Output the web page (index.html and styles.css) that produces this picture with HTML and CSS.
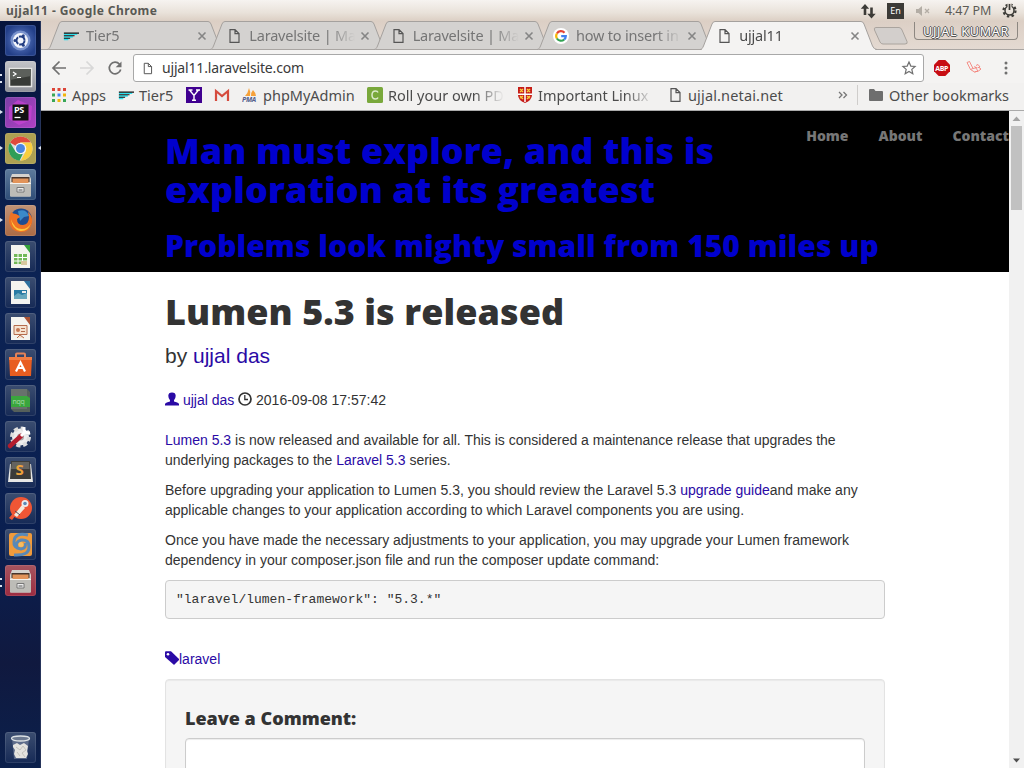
FILE: index.html
```html
<!DOCTYPE html>
<html lang="en">
<head>
<meta charset="utf-8">
<title>ujjal11</title>
<link rel="stylesheet" href="styles.css">
</head>
<body>
<svg class="defs" width="0" height="0">
  <defs>
    <symbol id="doc" viewBox="0 0 16 16"><path d="M4 1.600h5l4 4v8.800H4z M9 1.600v4h4" fill="none" stroke="#555" stroke-width="1.200"/></symbol>
    <symbol id="close" viewBox="0 0 10 10"><path d="M1.500 1.500l7 7M8.500 1.500l-7 7" stroke="#858585" stroke-width="1.600"/></symbol>
    <symbol id="tier" viewBox="0 0 18 16"><path d="M1 6h15M1 9h10M1 11.800h5" stroke="#2fe0ee" stroke-width="1.800"/><path d="M1 4.800h17M1 7.700h12M1 10.600h7" stroke="#111" stroke-width="1.200"/></symbol>
    <symbol id="tab" viewBox="0 0 177 29"><path d="M0 28.500C2 28.500 2.500 27 3.500 25L12 3Q13 .5 15 .5H161Q163 .5 164 3L172.500 25Q174 28.500 177 28.500"/></symbol>
    <symbol id="cabinet" viewBox="0 0 31 31"><path d="M7 5h17l2 5v16q0 1.500-1 1.500H6q-1 0-1-1.500V10z" fill="#d5d3ce"/><path d="M6.500 8h18v5h-18z" fill="#47362d"/><path d="M7.500 9.500h16V14h-16z" fill="#e2945a"/><path d="M5 14h21v12q0 1.500-1 1.500H6q-1 0-1-1.500z" fill="#bdbcb7"/><path d="M5 14.500h21" stroke="#f4f2ee"/><path d="M12 18.500h7v4.500h-7z" fill="#eee" stroke="#777"/><path d="M13.500 21h4" stroke="#555"/></symbol>
    <symbol id="page" viewBox="0 0 31 31"><path d="M6 4h14l5 6v17H6z" fill="#f4f4ef"/></symbol>
  </defs>
</svg>

<header class="panel">
  <div class="panel-title">ujjal11 - Google Chrome</div>
  <div class="tray">
    <svg width="16" height="16" viewBox="0 0 16 16"><path d="M5 1L.8 5.800H3.700V12h2.600V5.800H9.200zM11.500 15.500L7.300 10.700H10.200V4.500h2.600v6.200h2.900z" fill="#3c3b37"/></svg>
    <span class="lang">En</span>
    <svg class="speaker" width="16" height="14" viewBox="0 0 16 14"><path d="M1 5h2.500L7 2v10L3.500 9H1z" fill="#b3ada5"/><path d="M10 5l4 4M14 5l-4 4" stroke="#b3ada5" stroke-width="1.300"/></svg>
    <span class="clock">4:47 PM</span>
    <svg width="15" height="15" viewBox="0 0 15 15"><circle cx="7.500" cy="7.500" r="6" fill="none" stroke="#3c3b37" stroke-width="2.200" stroke-dasharray="2.400 2.312"/><circle cx="7.500" cy="7.500" r="4.500" fill="none" stroke="#3c3b37" stroke-width="1.500"/><path d="M7.500 0v7" stroke="#e9e2db" stroke-width="4"/><path d="M7.500 1v6" stroke="#3c3b37" stroke-width="1.700"/></svg>
  </div>
</header>

<div class="desktop">
  <aside class="launcher">
    <div class="tile t-ubuntu"><svg viewBox="0 0 31 31"><circle cx="15.500" cy="15.500" r="10" fill="#9fb4e4" opacity=".6"/><circle cx="15.500" cy="15.500" r="7.500" fill="#f4f6fc"/><circle cx="15.500" cy="15.500" r="4" fill="none" stroke="#233e83" stroke-width="2" stroke-dasharray="7.400 1"/><circle cx="10" cy="15.500" r="1.500" fill="#233e83"/><circle cx="18.300" cy="10.700" r="1.500" fill="#233e83"/><circle cx="18.300" cy="20.300" r="1.500" fill="#233e83"/></svg></div>
    <div class="tile t-grey run2"><svg viewBox="0 0 31 31"><rect x="4.500" y="7.500" width="22" height="18" fill="#383b37" stroke="#e6e6e4" stroke-width="1.500"/><path d="M5 8h21v7L5 19z" fill="#5c605b"/><path d="M8 11l3 2-3 2M12 16.500h4" fill="none" stroke="#fff" stroke-width="1.200"/></svg></div>
    <div class="tile t-ps run"><svg viewBox="0 0 31 31"><path d="M4 10L13 3l14 6-1 14-12 5-10-6z" fill="#d244d9" opacity=".6"/><rect x="7.500" y="7.500" width="16" height="16" fill="#111"/><text x="9" y="16" font-size="9" class="glyph">PS</text><path d="M9.500 20.500h6" stroke="#fff" stroke-width="1.300"/></svg></div>
    <div class="tile t-chrome run active"><svg viewBox="0 0 31 31"><circle cx="15.500" cy="15.500" r="12" fill="#ddd"/><path d="M15.500 15.500L5 9.500A12.200 12.200 0 0 1 26 9.500H15.500z" fill="#df4a3c"/><path d="M15.500 9.500H26A12.200 12.200 0 0 1 15.500 27.700L20.700 18.500z" fill="#f9ce3e"/><path d="M5 9.500L10.500 18.500L15.500 21L18 20.500L14.500 27.700A12.200 12.200 0 0 1 5 9.500z" fill="#2f9e57"/><circle cx="15.500" cy="15.500" r="5.800" fill="#f5f5f5"/><circle cx="15.500" cy="15.500" r="4.500" fill="#4a86e0"/></svg></div>
    <div class="tile t-slate"><svg viewBox="0 0 31 31"><use href="#cabinet"/></svg></div>
    <div class="tile t-firefox run"><svg viewBox="0 0 31 31"><circle cx="16" cy="14.500" r="11" fill="#1f4d91"/><path d="M13 6q8-3 11 5l-5 1-4 4z" fill="#3a8ac9"/><path d="M6 7Q8 9 11 9Q14 10 15 12L12 14Q12 20 18 20Q24 19 24 12L23 7Q28 11 27 18Q24 28 15 27Q5 26 4 16Q4 11 6 7z" fill="#ef7224"/><path d="M6 14Q9 24 17 24Q23 24 26 18Q23 27 15 26Q7 24 6 14z" fill="#ffc63c"/></svg></div>
    <div class="tile"><svg viewBox="0 0 31 31"><use href="#page"/><path d="M19 4h6v8z" fill="#35a23c"/><path d="M9 13h13v10H9z" fill="#72b958"/><path d="M9 16.500h13M9 20h13M13 13v10M17.500 13v10" stroke="#fff"/><path d="M16 20h6v4h-6z" fill="#d7c8a0"/></svg></div>
    <div class="tile"><svg viewBox="0 0 31 31"><use href="#page"/><path d="M19 4h6v8z" fill="#2d719f"/><path d="M9 13h13v9H9z" fill="#287ba4"/><path d="M9 19l4-3 4 2 5-2v6H9z" fill="#68a8bd"/><path d="M17 14h4v2h-4z" fill="#eee"/></svg></div>
    <div class="tile"><svg viewBox="0 0 31 31"><use href="#page"/><path d="M19 4h6v8z" fill="#a85235"/><path d="M9 12.500h13v9H9zM12 25l3-3 4 3" fill="#f5e2cf" stroke="#b56c4c"/><circle cx="13" cy="17" r="2" fill="#c57853"/><path d="M16 15.500h4M16 18.500h4" stroke="#b56c4c"/></svg></div>
    <div class="tile"><svg viewBox="0 0 31 31"><path d="M11 8V5.500q0-1 1-1h7q1 0 1 1V8" fill="none" stroke="#e48258" stroke-width="2"/><path d="M4 8h23l-1 19H5z" fill="#e85d20"/><path d="M4 8h23v3H4z" fill="#f17c43"/><path d="M11 22.500l4.500-9L20 22.500M12.500 19h6" fill="none" stroke="#fff" stroke-width="2.200"/></svg></div>
    <div class="tile"><svg viewBox="0 0 31 31"><path d="M6 4h16l3 3v20H9l-3-3z" fill="#55605b"/><path d="M6 4h16v20H6z" fill="#68716c"/><path d="M6 11h16l3 2v9H6z" fill="#3aa63d"/><text x="7.500" y="19" font-size="7" class="glyph soft">nqq</text></svg></div>
    <div class="tile"><svg viewBox="0 0 31 31"><circle cx="15.500" cy="16" r="8.500" fill="#eee" stroke="#ddd" stroke-width="4" stroke-dasharray="4 2.670"/><circle cx="15.500" cy="16" r="3.500" fill="#aaa"/><path d="M5 25l11-10" stroke="#b41d2e" stroke-width="4.500" stroke-linecap="round"/><path d="M16 15l5-5M19 6q-1 6 6 6" fill="none" stroke="#fff" stroke-width="3"/></svg></div>
    <div class="tile"><svg viewBox="0 0 31 31"><path d="M5 7h21l2 18H3z" fill="#e7e7e5"/><path d="M6 4h19l1 18H5z" fill="#3b3b39"/><path d="M7 5h17l.5 7H6z" fill="#64635f"/><text x="10.500" y="18" font-size="15" class="glyph sublime">S</text></svg></div>
    <div class="tile"><svg viewBox="0 0 31 31"><circle cx="16" cy="15" r="11" fill="#ef5635"/><path d="M4 25l5-6 2 3-4 5z" fill="#ef5635"/><path d="M9 22l8-10 3 3-8 9z" fill="#f4e9dc"/><circle cx="20" cy="10.500" r="3.500" fill="#eee"/><circle cx="20" cy="10.500" r="1.800" fill="#5c89b5"/><path d="M10 18l5 4" stroke="#4b4b58"/></svg></div>
    <div class="tile"><svg viewBox="0 0 31 31"><rect x="4" y="4" width="23" height="23" rx="2" fill="#f09b3c"/><path d="M23 6Q10 3 9 12Q8 19 16 20Q22 19 20 14M9 26Q24 27 24 18Q24 10 16 11Q10 13 12 18" fill="none" stroke="#5a89b8" stroke-width="3"/><circle cx="16" cy="15.500" r="2.500" fill="#f7bd60"/></svg></div>
    <div class="tile t-red run2"><svg viewBox="0 0 31 31"><use href="#cabinet"/></svg></div>
    <div class="tile trash"><svg viewBox="0 0 31 31"><path d="M7 6h17l-2 21H9z" fill="#7e8ba3" opacity=".6"/><path d="M8 13l4-2 3 2 4-2 4 3-1 5 1 3-2 4H11l-2-4 1-4-2-3z" fill="#e4e3df"/><path d="M11 15l4 3 3-4 3 4-4 3 3 4M12 20l3 4" fill="none" stroke="#c3c2bd"/><ellipse cx="15.500" cy="6.500" rx="9" ry="2.500" fill="#6c7990" stroke="#dce1e4" stroke-width="1.300"/></svg></div>
  </aside>

  <main class="browser">
    <div class="tabstrip">
      <div class="tab"><svg class="shape"><use href="#tab"/></svg><svg class="fav"><use href="#tier"/></svg><span class="label">Tier5</span><svg class="x"><use href="#close"/></svg></div>
      <div class="tab"><svg class="shape"><use href="#tab"/></svg><svg class="fav"><use href="#doc"/></svg><span class="label">Laravelsite | Ma</span><svg class="x"><use href="#close"/></svg></div>
      <div class="tab"><svg class="shape"><use href="#tab"/></svg><svg class="fav"><use href="#doc"/></svg><span class="label">Laravelsite | Ma</span><svg class="x"><use href="#close"/></svg></div>
      <div class="tab"><svg class="shape"><use href="#tab"/></svg><svg class="fav" viewBox="0 0 16 16"><circle cx="8" cy="8" r="8" fill="#fff"/><g fill="none" stroke-width="2.200"><path d="M11.500 4.700A4.800 4.800 0 0 0 3.900 5.500" stroke="#e54335"/><path d="M3.900 5.500A4.800 4.800 0 0 0 3.900 10.500" stroke="#f6b704"/><path d="M3.900 10.500A4.800 4.800 0 0 0 11.200 11.500" stroke="#34a353"/><path d="M11.200 11.500A4.800 4.800 0 0 0 12.800 8.100H8.200" stroke="#4280ef"/></g></svg><span class="label">how to insert in</span><svg class="x"><use href="#close"/></svg></div>
      <div class="tab current"><svg class="shape"><use href="#tab"/></svg><svg class="fav"><use href="#doc"/></svg><span class="label">ujjal11</span><svg class="x"><use href="#close"/></svg></div>
      <svg class="newtab" viewBox="0 0 36 18"><path d="M3 .5H26Q28 .5 29 3L34 14.500Q35 17 32 17H10Q8 17 7 15L1.500 3Q.5 .5 3 .5z" fill="#d3cfcc" stroke="#aaa49e"/></svg>
      <div class="profile">UJJAL KUMAR</div>
    </div>

    <div class="toolbar">
      <svg class="nav" viewBox="0 0 16 16"><path d="M15 8H2.500M8.500 1.500L2 8l6.500 6.500" fill="none" stroke="#707070" stroke-width="1.700"/></svg>
      <svg class="nav" viewBox="0 0 16 16"><path d="M1 8h12.500M7.500 1.500L14 8l-6.500 6.500" fill="none" stroke="#d8d8d8" stroke-width="1.700"/></svg>
      <svg class="nav" viewBox="0 0 16 16"><path d="M12.500 4.200A5.800 5.800 0 1 0 13.700 9.500" fill="none" stroke="#707070" stroke-width="1.700"/><path d="M14.500 1.500v5.800H8.700z" fill="#707070"/></svg>
      <div class="omnibox">
        <svg class="omni-doc" viewBox="0 0 16 16"><use href="#doc"/></svg>
        <span class="url">ujjal11.laravelsite.com</span>
        <svg class="star" viewBox="0 0 16 16"><path d="M8 2l1.800 4.100 4.300.4-3.300 2.900 1 4.300L8 11.400l-3.800 2.300 1-4.300-3.300-2.900 4.300-.4z" fill="none" stroke="#707070" stroke-width="1.200"/></svg>
      </div>
      <svg class="abp" viewBox="0 0 16 16"><path d="M4.700 0h6.600L16 4.700v6.600L11.300 16H4.700L0 11.300V4.700z" fill="#c70d13"/><text x="1.200" y="10.600" font-size="7" class="glyph">ABP</text></svg>
      <svg class="lara" viewBox="0 0 16 16"><path d="M1 2.500L3.500 1.500 7 8.500 4.500 9.500zM4.500 9.500l4 2.500 3.500-1L8.500 6M10 5.500l2-1 2 2.500-2.500.8M7 8.500l4-1M8.500 12l4-1 2.500-2-2-1.500" fill="none" stroke="#f4827b" stroke-width=".9"/></svg>
      <svg class="dots" viewBox="0 0 4 14"><g fill="#707070"><circle cx="2" cy="2" r="1.500"/><circle cx="2" cy="7" r="1.500"/><circle cx="2" cy="12" r="1.500"/></g></svg>
    </div>

    <div class="bookmarks">
      <div class="bm b-apps"><svg viewBox="0 0 16 16"><path d="M1 1h3v3H1zM6.500 1h3v3h-3zM12 1h3v3h-3z" fill="#dc4437"/><path d="M1 6.500h3v3H1zM12 12h3v3h-3z" fill="#3aa757"/><path d="M6.500 6.500h3v3h-3z" fill="#4285f4"/><path d="M12 6.500h3v3h-3zM6.500 12h3v3h-3z" fill="#f2b50b"/><path d="M1 12h3v3H1z" fill="#3aa757"/></svg><span>Apps</span></div>
      <div class="bm b-tier"><svg><use href="#tier"/></svg><span>Tier5</span></div>
      <div class="bm b-y"><svg viewBox="0 0 16 16"><path d="M0 0h16v16H0z" fill="#400090"/><path d="M3.500 3L8 8.500 12.500 3M8 8v5M2.500 3h4M10 3h4M6 13.200h4" stroke="#fff" stroke-width="1.400" fill="none"/></svg></div>
      <div class="bm b-gmail"><svg viewBox="0 0 16 16"><path d="M1 3h14v11H1z" fill="#eee"/><path d="M2 14V4l6 5 6-5v10" fill="none" stroke="#d54b3d" stroke-width="2.200"/></svg></div>
      <div class="bm b-pma"><svg viewBox="0 0 16 16"><path d="M3 9q3-3 4-8 2 4 1 8zM9 9q0-4 2-6 3 3 3 6z" fill="#f6a13a"/><text x="0" y="15" font-size="7" class="glyph pma">PMA</text></svg><span>phpMyAdmin</span></div>
      <div class="bm b-roll"><svg viewBox="0 0 16 16"><rect width="16" height="16" rx="1.500" fill="#79a83b"/><path d="M11 5.500Q10.500 4 8.500 4Q5 4 5 8t3.500 4Q10.500 12 11 10.500" fill="none" stroke="#dceacb" stroke-width="1.500"/></svg><span class="fade">Roll your own PD</span></div>
      <div class="bm b-linux"><svg viewBox="0 0 16 16"><path d="M1 0h14v8q0 5-7 8-7-3-7-8z" fill="#c61c18"/><path d="M3 2l3 3M6 2L3 5M10 2l3 3M13 2l-3 3M3 9l3 3M6 9l-3 2M10 9l3 2M13 9l-3 3" stroke="#f8cd3c" stroke-width="1.400"/><path d="M8 0v15M1 7.200h14" stroke="#fff" stroke-width="1.500"/></svg><span class="fade">Important Linux</span></div>
      <div class="bm b-netai"><svg><use href="#doc"/></svg><span>ujjal.netai.net</span></div>
      <svg class="more" viewBox="0 0 10 8"><path d="M1 1l3 3-3 3M5.500 1l3 3-3 3" fill="none" stroke="#777" stroke-width="1.300"/></svg>
      <div class="bm b-other"><svg viewBox="0 0 16 16"><path d="M1 3q0-1 1-1h4l1.500 2H14q1 0 1 1v8q0 1-1 1H2q-1 0-1-1z" fill="#6e6e6e"/></svg><span>Other bookmarks</span></div>
    </div>

    <div class="viewport">
      <div class="page">
        <header class="hero">
          <div class="hero-text">
            <h1>Man must explore, and this is exploration at its greatest</h1>
            <h2>Problems look mighty small from 150 miles up</h2>
          </div>
          <nav class="site-nav"><a>Home</a><a>About</a><a>Contact</a></nav>
        </header>
        <article class="post">
          <h1>Lumen 5.3 is released</h1>
          <p class="lead">by <a>ujjal das</a></p>
          <p class="meta"><a><svg class="gi" viewBox="0 0 14 14"><path d="M0 13.500v-1.800Q1 10.500 5 9.500V8.300Q3.300 6.500 3.300 3.800 3.300.4 7 .4t3.700 3.400Q10.700 6.500 9 8.300v1.200q4 1 5 2.200v1.800z" fill="#2a0aa5"/></svg> ujjal das</a> <svg class="gi" viewBox="0 0 14 14"><circle cx="7" cy="7" r="6" fill="none" stroke="#333" stroke-width="1.700"/><path d="M6.800 3v4.500H10" fill="none" stroke="#333" stroke-width="1.300"/></svg> 2016-09-08 17:57:42</p>
          <p><a>Lumen 5.3</a> is now released and available for all. This is considered a maintenance release that upgrades the underlying packages to the <a>Laravel 5.3</a> series.</p>
          <p>Before upgrading your application to Lumen 5.3, you should review the Laravel 5.3 <a>upgrade guide</a>and make any applicable changes to your application according to which Laravel components you are using.</p>
          <p>Once you have made the necessary adjustments to your application, you may upgrade your Lumen framework dependency in your composer.json file and run the composer update command:</p>
          <pre>"laravel/lumen-framework": "5.3.*"</pre>
          <p class="tags"><a><svg class="gi" viewBox="0 0 14 14"><path d="M0 1.200Q0 .2 1 .2h5L14 8q.4.500 0 1L9.500 13.600q-.5.400-1 0L0 6z" fill="#2a0aa5"/><circle cx="3" cy="3.200" r="1.300" fill="#fff"/></svg>laravel</a></p>
          <section class="well">
            <h4>Leave a Comment:</h4>
            <div class="textarea"></div>
          </section>
        </article>
      </div>
      <div class="scrollbar">
        <svg viewBox="0 0 15 15"><path d="M3.500 10L7.500 5.500l4 4.500z" fill="#a3a3a3"/></svg>
        <div class="thumb"></div>
        <svg class="down" viewBox="0 0 15 15"><path d="M4 5.500h7L7.500 9.500z" fill="#505050"/></svg>
      </div>
    </div>
  </main>
</div>
</body>
</html>
```
FILE: styles.css
```css
* { box-sizing: border-box; }
html, body { height: 100%; overflow: hidden; }
body {
  margin: 0;
  display: flex;
  flex-direction: column;
  font-family: "Noto Sans", "Open Sans", sans-serif;
  color: #4c4c4c;
}
svg { display: block; flex: none; }
.defs { display: none; }
.glyph { font-family: "Open Sans", sans-serif; font-weight: 700; fill: #fff; letter-spacing: -.3px; }
.glyph.soft { fill: #a9dba8; font-weight: 400; }
.glyph.sublime { fill: #eca13b; }
.glyph.pma { fill: #55608c; font-style: italic; }

/* Desktop panel */
.panel {
  height: 21px;
  flex: none;
  display: flex;
  align-items: center;
  justify-content: space-between;
  padding: 0 7px 0 6px;
  background: linear-gradient(#f6f3f0, #e9e2da 60%, #dccfc4);
}
.panel-title { font-size: 12px; letter-spacing: .42px; font-weight: 700; color: #595954; white-space: nowrap; }
.tray { display: flex; align-items: center; }
.lang {
  width: 17px; height: 16px; margin: 0 11px 0 11px;
  background: #3c3b37; color: #fff;
  font-size: 9px; line-height: 16px; text-align: center;
}
.clock { width: 57px; margin-left: 14px; font-size: 12.500px; letter-spacing: -.1px; color: #5c5b56; white-space: nowrap; }

/* Launcher */
.desktop { flex: 1; min-height: 0; display: flex; }
.launcher {
  width: 41px;
  flex: none;
  display: flex;
  flex-direction: column;
  gap: 5px;
  padding: 4px 5px;
  background: linear-gradient(#06143c, #0c2354 35%, #0a1f50 70%, #10193f 86%, #0b204c);
  border-right: 1px solid #26345a;
}
.tile {
  position: relative;
  width: 31px; height: 31px; flex: none;
  border-radius: 3px;
  background: linear-gradient(#3b4d70, #162a56);
  box-shadow: inset 0 0 0 1px rgba(255,255,255,.1);
}
.t-ubuntu { background: radial-gradient(#6482cc, #233f88 75%); }
.t-grey { background: linear-gradient(#c3c4c8, #8f9299); }
.t-ps { background: linear-gradient(135deg, #7c3fa7, #b140c4); }
.t-chrome { background: #ada052; }
.t-slate { background: linear-gradient(#5e7b9c, #2e4c77); }
.t-firefox { background: linear-gradient(#c09276, #ac6b45); }
.t-red { background: linear-gradient(#a5545f, #9c2c41); }
.trash { margin-top: auto; margin-bottom: 1px; }
.run::before, .run2::before, .active::after {
  content: "";
  position: absolute;
  top: 13px; left: -5px;
  border: 2.500px solid transparent;
  border-left: 3px solid #dde4f0;
  border-right: 0;
}
.run2::before { border: 0; width: 2px; height: 5px; border-top: 2px solid #dde4f0; border-bottom: 2px solid #dde4f0; }
.active::after { left: auto; right: -5px; border-left: 0; border-right: 3px solid #dde4f0; }

/* Tabs */
.browser { flex: 1; min-width: 0; display: flex; flex-direction: column; background: #f2f1f0; }
.tabstrip {
  height: 29px;
  flex: none;
  display: flex;
  padding-left: 6px;
  background: linear-gradient(#dccfc5, #e4dad2);
  box-shadow: inset 0 -1px #a9a5a2;
}
.tab {
  position: relative;
  width: 177px; height: 29px; flex: none;
  margin-right: -13.700px;
  padding: 0 17px 2px 16px;
  display: flex;
  align-items: center;
}
.shape { position: absolute; inset: 0; width: 177px; height: 29px; fill: #d4d2d0; stroke: #a5a19e; stroke-width: 1; }
.current { z-index: 1; }
.current .shape { fill: #f4f3f2; }
.tab::after { content: ""; position: absolute; left: 2px; right: 2px; bottom: 0; height: 1px; background: #a9a5a2; }
.current::after { background: #f4f3f2; }
.fav, .label, .x { position: relative; }
.fav { width: 16px; height: 16px; margin-right: 7px; margin-top: 2px; }
.label {
  width: 108px;
  font-size: 14.500px;
  letter-spacing: -.2px;
  color: #757575;
  white-space: nowrap;
  overflow: hidden;
  -webkit-mask-image: linear-gradient(90deg, #000 74%, transparent 98%);
  mask-image: linear-gradient(90deg, #000 74%, transparent 98%);
}
.current .label { color: #4c4c4c; }
.x { width: 10px; height: 10px; margin-left: 3px; margin-top: 2px; }
.newtab { width: 36px; height: 18px; margin: 6px 0 0 9px; }
.profile {
  width: 104px; height: 18px;
  margin: 1px 6px 0 auto;
  border: 1px solid #8d8781;
  border-top: 0;
  border-radius: 0 0 4px 4px;
  font-size: 12.500px;
  letter-spacing: .75px;
  line-height: 20px;
  text-align: center;
  color: #fff;
  text-shadow: 1px 0 #555, -1px 0 #555, 0 1px #555, 0 -1px #555;
  white-space: nowrap;
}

/* Toolbar */
.toolbar { height: 33px; flex: none; display: flex; align-items: center; padding: 3px 16px 0 10px; background: #f4f3f2; }
.nav { width: 16px; height: 16px; margin-right: 12px; }
.omnibox {
  width: 791px; height: 28px;
  margin-left: -2px;
  display: flex;
  align-items: center;
  padding: 0 7px;
  border: 1px solid #a8a8a8;
  border-radius: 3px;
  background: #fff;
}
.omni-doc { width: 13px; height: 13px; margin-right: 8px; }
.url { flex: 1; font-size: 14px; line-height: 19px; padding-bottom: 1px; letter-spacing: -.17px; color: #3a3a3a; }
.star { width: 16px; height: 16px; margin-right: -1px; }
.abp { width: 16px; height: 16px; margin-left: 10px; }
.lara { width: 16px; height: 16px; margin-left: 16px; }
.dots { width: 4px; height: 14px; margin-left: auto; }

/* Bookmarks */
.bookmarks { height: 28px; flex: none; display: flex; align-items: center; padding: 0 0 3px 10px; background: #f2f1f0; border-bottom: 1px solid #aaa; }
.bm { display: flex; align-items: center; flex: none; font-size: 14.500px; line-height: 20px; white-space: nowrap; }
.bm svg { width: 16px; height: 16px; margin-right: 5px; }
.b-apps { width: 67px; }
.b-tier { width: 68px; }
.b-y { width: 28px; }
.b-gmail { width: 28px; }
.b-pma { width: 125px; }
.b-roll { width: 150px; }
.b-linux { width: 150px; }
.b-netai { width: 171px; letter-spacing: .15px; }
.b-roll span, .b-linux span { width: 116px; overflow: hidden; }
.fade { -webkit-mask-image: linear-gradient(90deg, #000 75%, transparent); mask-image: linear-gradient(90deg, #000 75%, transparent); }
.more { width: 10px; height: 8px; }
.b-other { margin-left: 9px; padding-left: 10px; border-left: 1px solid #cfcdcb; }

/* Web page */
.viewport { flex: 1; min-height: 0; display: flex; background: #fff; }
.page { flex: 1; min-width: 0; overflow: hidden; font: 14px/20px "Liberation Sans", Arial, sans-serif; color: #333; }
.page a { color: #2a0aa5; }
.page h1, .page h2, .page h4 { margin: 0; font-family: "Open Sans", sans-serif; font-weight: 800; line-height: 1.1; }
.page h1 { font-size: 36px; line-height: 39px; letter-spacing: .06px; }
.page h2 { font-size: 30px; letter-spacing: .03px; }
.hero { display: grid; height: 161px; background: #000; }
.hero-text { grid-area: 1 / 1; width: 720px; margin-left: 124px; padding-top: 20px; color: #0000cd; }
.hero-text h1 { margin-bottom: 20px; }
.site-nav { grid-area: 1 / 1; justify-self: end; display: flex; gap: 30px; padding-top: 15px; font-family: "Open Sans", sans-serif; font-weight: 800; }
.page .site-nav a { color: #777; }
.post { width: 720px; margin-left: 124px; padding-top: 20px; }
.page p { margin: 0 0 10px; }
.page .lead { margin: 10px 0 20px; font-size: 21px; line-height: 29px; }
.page .meta { margin-bottom: 20px; }
.gi { display: inline-block; width: 14px; height: 14px; vertical-align: -1px; }
pre {
  height: 39px;
  margin: 0 0 30px;
  padding: 9px 10px;
  border: 1px solid #ccc;
  border-radius: 4px;
  background: #f5f5f5;
  font: 13px/19px "Liberation Mono", monospace;
}
.well { height: 200px; padding: 29px 19px; border: 1px solid #e3e3e3; border-radius: 4px; background: #f5f5f5; box-shadow: inset 0 1px 1px rgba(0,0,0,.05); }
.page h4 { font-size: 18px; margin-bottom: 9px; }
.textarea { height: 80px; border: 1px solid #ccc; border-radius: 4px; background: #fff; box-shadow: inset 0 1px 1px rgba(0,0,0,.075); }
.scrollbar { width: 15px; flex: none; display: flex; flex-direction: column; background: #f1f1f1; }
.scrollbar svg { width: 15px; height: 15px; }
.thumb { width: 11px; height: 84px; margin-left: 2px; background: #c1c1c1; }
.down { margin-top: auto; }
```
